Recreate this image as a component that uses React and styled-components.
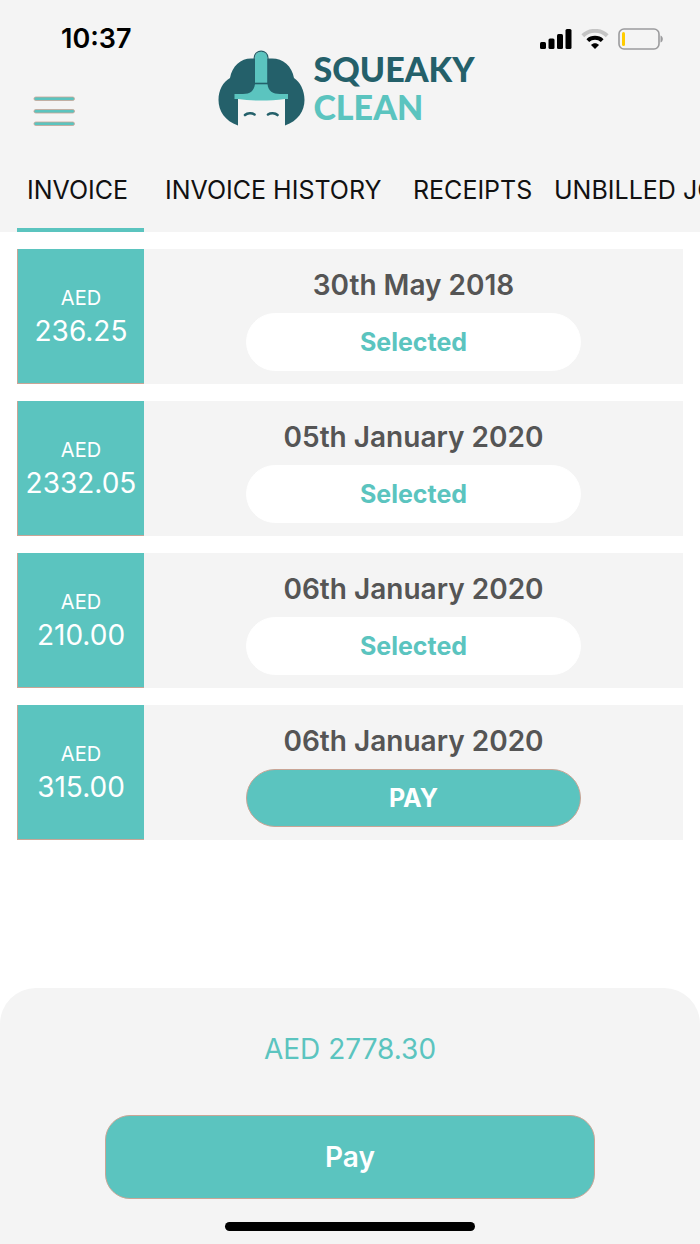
import React, { useState } from "react";
import styled, { createGlobalStyle } from "styled-components";

const TEAL = "#5bc4bf";
const DARK_TEAL = "#24606a";
const GREY = "#f4f4f4";
const EDGE = "#c9a596";

const GlobalStyle = createGlobalStyle`
    * {
        box-sizing: border-box;
    }

    body {
        margin: 0;
        background: #fff;
        font-family: Inter, "Liberation Sans", sans-serif;
    }

    button {
        font-family: inherit;
        cursor: pointer;
    }
`;

const Screen = styled.div`
    display: flex;
    flex-direction: column;
    min-height: 100vh;
    overflow: hidden;
`;

const Header = styled.header`
    background: ${GREY};
`;

const StatusBar = styled.div`
    display: flex;
    justify-content: space-between;
    align-items: center;
    height: 50px;
    padding: 28px 36px 0 61px;
`;

const Time = styled.time`
    font-size: 27px;
    line-height: 22px;
    font-weight: 600;
    color: #000;
`;

const StatusIcons = styled.div`
    display: flex;
    align-items: center;
    gap: 9px;

    svg {
        display: block;
    }
`;

const BrandRow = styled.div`
    display: grid;
    grid-template-columns: 1fr auto 1fr;
    align-items: end;
    padding: 0 40px 0 33px;
`;

const MenuButton = styled.button`
    justify-self: start;
    padding: 0;
    border: 0;
    background: none;

    svg {
        display: block;
    }
`;

const Brand = styled.a`
    display: flex;
    align-items: flex-start;
    gap: 8px;
    text-decoration: none;

    svg {
        display: block;
    }
`;

const BrandName = styled.span`
    display: flex;
    flex-direction: column;
    font-family: Lato, "Liberation Sans", sans-serif;
    font-size: 34px;
    line-height: 38px;
    font-weight: 900;
    color: ${DARK_TEAL};
`;

const BrandAccent = styled.span`
    color: ${TEAL};
`;

const Tabs = styled.nav`
    display: grid;
    grid-template-columns: 138px 248px 141px max-content;
    margin-top: 22px;
    padding-left: 17px;
`;

const Tab = styled.button`
    width: calc(100% - 11px);
    height: 84px;
    padding: 4px 0 0 10px;
    border: 0;
    border-bottom: 4px solid ${(props) => (props.$active ? TEAL : "transparent")};
    background: none;
    font-size: 25px;
    line-height: 76px;
    color: #111;
    text-align: left;
    white-space: nowrap;
`;

const InvoiceList = styled.main`
    display: flex;
    flex-direction: column;
    flex: 1;
    gap: 17px;
    padding: 17px;
`;

const Invoice = styled.article`
    display: flex;
    min-height: 135px;
    background: ${GREY};
`;

const Amount = styled.div`
    display: flex;
    flex-direction: column;
    align-items: center;
    justify-content: center;
    width: 127px;
    border: solid ${EDGE};
    border-width: 0 0 1px 1px;
    padding-bottom: 2px;
    background: ${TEAL};
    color: #fff;
    font-size: 28px;
    line-height: 34px;
`;

const Currency = styled.span`
    font-size: 20px;
    line-height: 32px;
`;

const Details = styled.div`
    display: flex;
    flex-direction: column;
    align-items: center;
    flex: 1;
    gap: 10px;
    padding-top: 18px;
`;

const InvoiceDate = styled.h2`
    margin: 0;
    font-size: 28px;
    line-height: 36px;
    font-weight: 600;
    color: #555;
`;

const SelectButton = styled.button`
    width: 62%;
    height: 58px;
    border: 1px solid ${(props) => (props.$selected ? "#fff" : EDGE)};
    border-radius: 29px;
    background: ${(props) => (props.$selected ? "#fff" : TEAL)};
    color: ${(props) => (props.$selected ? TEAL : "#fff")};
    font-size: 25px;
    font-weight: 700;
`;

const Summary = styled.footer`
    display: flex;
    flex-direction: column;
    align-items: center;
    padding: 43px 0 13px;
    border-radius: 36px 36px 0 0;
    background: ${GREY};
`;

const Total = styled.output`
    font-size: 28px;
    line-height: 36px;
    color: ${TEAL};
`;

const PayButton = styled.button`
    width: 70%;
    height: 84px;
    margin: 48px 0 23px;
    border: 1px solid ${EDGE};
    border-radius: 25px;
    background: ${TEAL};
    color: #fff;
    font-size: 28px;
    font-weight: 600;
`;

const HomeIndicator = styled.div`
    width: 250px;
    height: 9px;
    border-radius: 5px;
    background: #000;
`;

const SignalIcon = () => (
    <svg width="32" height="20" viewBox="0 0 32 20" aria-hidden="true">
        <rect x="0" y="13" width="6" height="7" rx="1.5" />
        <rect x="8.5" y="9.5" width="6" height="10.5" rx="1.5" />
        <rect x="17" y="5" width="6" height="15" rx="1.5" />
        <rect x="25.5" y="0" width="6" height="20" rx="1.5" />
    </svg>
);

const WifiIcon = () => (
    <svg width="28" height="20" viewBox="0 0 28 20" aria-hidden="true">
        <path d="M1.8 6.8C8.6 0.2 19.4 0.2 26.2 6.8" fill="none" stroke="#c4c4c4" strokeWidth="4" />
        <path d="M6.8 11.6C10.8 7.9 17.2 7.9 21.2 11.6" fill="none" stroke="#000" strokeWidth="4" />
        <path d="M14 20L10 16C12.2 13.8 15.8 13.8 18 16Z" />
    </svg>
);

const BatteryIcon = () => (
    <svg width="46" height="22" viewBox="0 0 46 22" aria-hidden="true">
        <rect x="1" y="1" width="40" height="20" rx="5" fill="none" stroke="#9b9b9d" strokeWidth="1.6" />
        <rect x="4" y="4" width="3" height="14" rx="1.5" fill="#fc0" />
        <path d="M42.5 7.5C45.6 8.5 45.6 13.5 42.5 14.5Z" fill="#9b9b9d" />
    </svg>
);

const MenuIcon = () => (
    <svg width="42" height="30" viewBox="0 0 42 30" aria-hidden="true">
        {[1, 13.5, 26].map((y) => (
            <rect key={y} x="1" y={y} width="40.5" height="3.5" rx="1.7" fill={TEAL} stroke={EDGE} strokeWidth="0.8" />
        ))}
    </svg>
);

const LogoMark = () => (
    <svg width="87" height="76" viewBox="0 0 87 76" aria-hidden="true">
        <path
            d="M20 75.5C7 71 0.5 61 0.5 50C0.5 40 5 32 12 28C14 16 23 8.5 33 8.5C38 8.5 40 9 43.5 9.5C47 9 49 8.5 54 8.5C65 8.5 74 16 76 28C82 32 86.5 40 86.5 50C86.5 61 80 71 67 75.5Z"
            fill={DARK_TEAL}
        />
        <path d="M20 48H67V76H20Z" fill={GREY} />
        <path
            d="M37 8C37 -0.5 49.5 -0.5 49.5 8V34C50 41 55 44 62 44H70V49H67C51 51 34 51 20 49H16.5V44H25C32 44 36 41 37 34Z"
            fill={TEAL}
        />
        <path d="M36.2 34V8C36.2 -1.2 50 -1.2 50 8V34" fill="none" stroke={DARK_TEAL} strokeWidth="1.2" />
        <path d="M36 33.5H50.5" stroke={DARK_TEAL} strokeWidth="1.6" />
        <path
            d="M27 65C29.5 62.8 34 62.8 36.5 64.5M50 64.5C52.5 62.8 57 62.8 59.5 65"
            fill="none"
            stroke={DARK_TEAL}
            strokeWidth="2.6"
            strokeLinecap="round"
        />
    </svg>
);

const TABS = ["INVOICE", "INVOICE HISTORY", "RECEIPTS", "UNBILLED JOBS"];

const INVOICES = [
    { id: 1, amount: "236.25", date: "30th May 2018" },
    { id: 2, amount: "2332.05", date: "05th January 2020" },
    { id: 3, amount: "210.00", date: "06th January 2020" },
    { id: 4, amount: "315.00", date: "06th January 2020" },
];

function App() {
    const [activeTab, setActiveTab] = useState("INVOICE");
    const [selected, setSelected] = useState([1, 2, 3]);

    const toggle = (id) =>
        setSelected(
            selected.includes(id)
                ? selected.filter((item) => item !== id)
                : [...selected, id]
        );

    const total = INVOICES.filter(({ id }) => selected.includes(id)).reduce(
        (sum, { amount }) => sum + Number(amount),
        0
    );

    return (
        <Screen>
            <GlobalStyle />
            <Header>
                <StatusBar>
                    <Time>10:37</Time>
                    <StatusIcons>
                        <SignalIcon />
                        <WifiIcon />
                        <BatteryIcon />
                    </StatusIcons>
                </StatusBar>
                <BrandRow>
                    <MenuButton aria-label="Menu">
                        <MenuIcon />
                    </MenuButton>
                    <Brand href="#">
                        <LogoMark />
                        <BrandName>
                            SQUEAKY
                            <BrandAccent>CLEAN</BrandAccent>
                        </BrandName>
                    </Brand>
                </BrandRow>
                <Tabs>
                    {TABS.map((tab) => (
                        <Tab
                            key={tab}
                            $active={tab === activeTab}
                            onClick={() => setActiveTab(tab)}
                        >
                            {tab}
                        </Tab>
                    ))}
                </Tabs>
            </Header>
            <InvoiceList>
                {INVOICES.map(({ id, amount, date }) => {
                    const isSelected = selected.includes(id);
                    return (
                        <Invoice key={id}>
                            <Amount>
                                <Currency>AED</Currency>
                                {amount}
                            </Amount>
                            <Details>
                                <InvoiceDate>{date}</InvoiceDate>
                                <SelectButton
                                    $selected={isSelected}
                                    onClick={() => toggle(id)}
                                >
                                    {isSelected ? "Selected" : "PAY"}
                                </SelectButton>
                            </Details>
                        </Invoice>
                    );
                })}
            </InvoiceList>
            <Summary>
                <Total>AED {total.toFixed(2)}</Total>
                <PayButton>Pay</PayButton>
                <HomeIndicator />
            </Summary>
        </Screen>
    );
}

export default App;
